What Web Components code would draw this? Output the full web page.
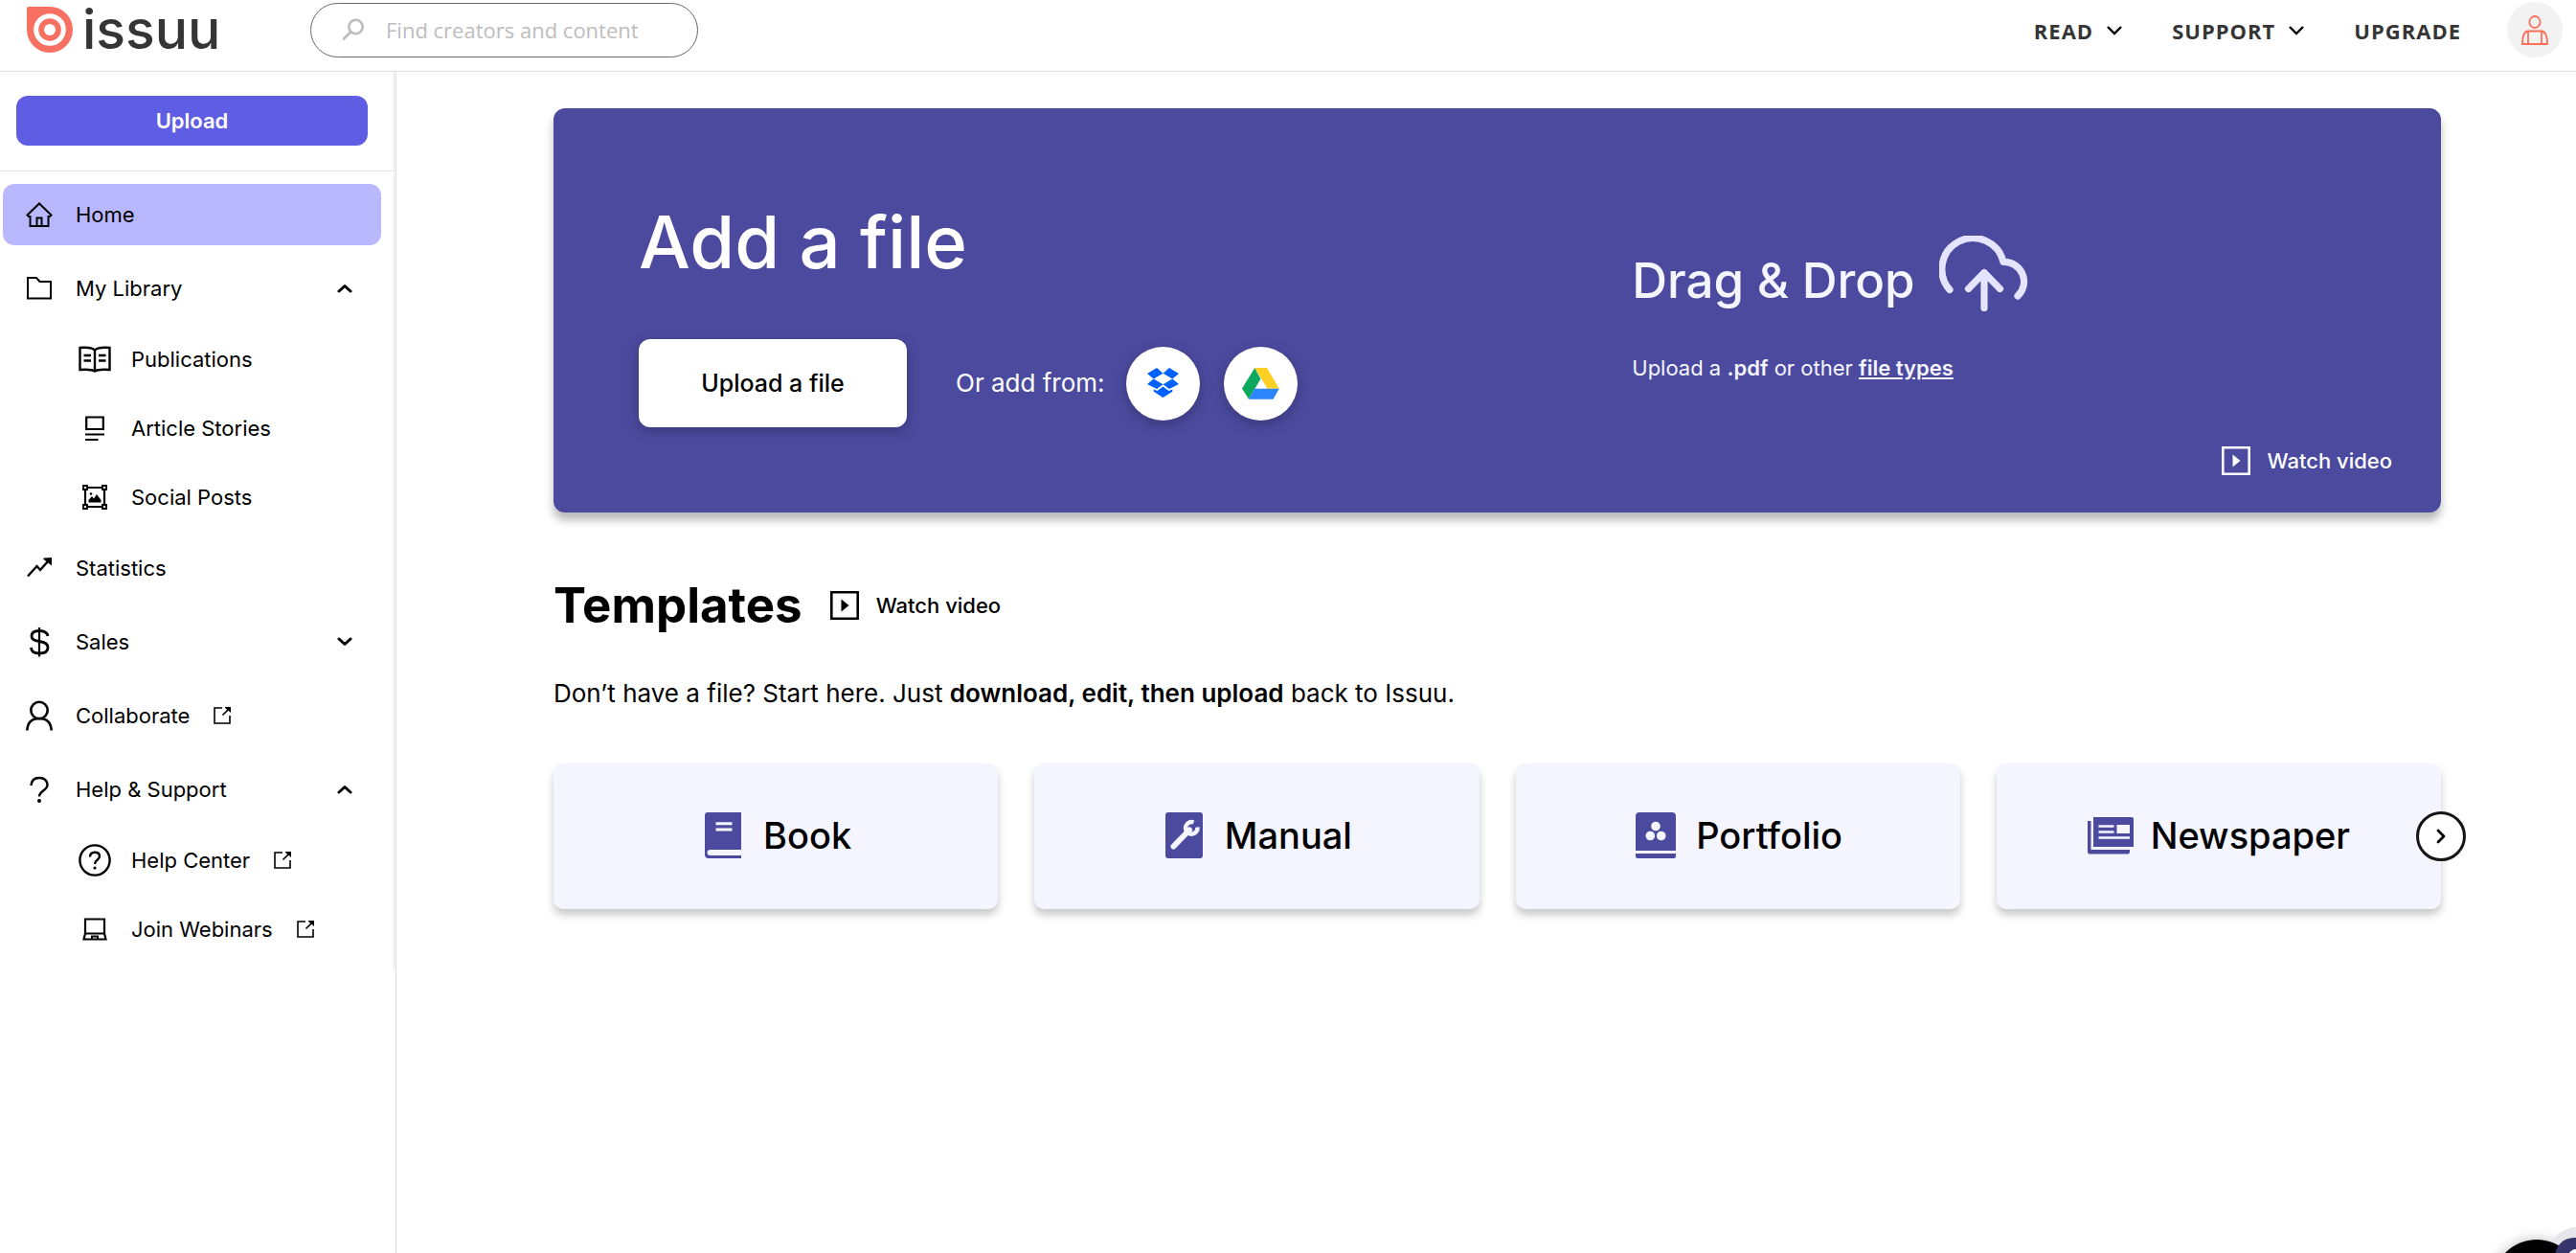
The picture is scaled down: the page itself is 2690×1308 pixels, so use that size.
<!DOCTYPE html>
<html lang="en">
<head>
<meta charset="utf-8">
<title>Issuu</title>
<style>
  html, body { margin: 0; height: 100%; background: #fff; }
  body { font-family: Inter, "Liberation Sans", sans-serif; font-size: 22px; line-height: 32px; color: #000; }
</style>
</head>
<body>
<app-shell></app-shell>
<script>
const define = (name, html, setup) => {
  const template = document.createElement('template');
  template.innerHTML = html;
  customElements.define(name, class extends HTMLElement {
    constructor() {
      super();
      this.attachShadow({ mode: 'open' }).append(template.content.cloneNode(true));
    }
    connectedCallback() { if (setup) setup(this, this.shadowRoot); }
  });
};

const line = (w, h, sw, body) =>
  `<svg width="${w}" height="${h}" viewBox="0 0 ${w} ${h}" fill="none" stroke="currentColor" stroke-width="${sw}" aria-hidden="true">${body}</svg>`;
const solid = (w, h, body) =>
  `<svg width="${w}" height="${h}" viewBox="0 0 ${w} ${h}" fill="currentColor" aria-hidden="true">${body}</svg>`;

const ICONS = {
  logo: solid(48, 48, '<path fill="#f77062" d="M2 0H24A24 24 0 1 1 0 24V2Q0 0 2 0Z"/><circle cx="24" cy="24" r="14.3" fill="none" stroke="#fff" stroke-width="5"/><circle cx="24" cy="24" r="6" fill="#fff"/>'),
  search: line(24, 24, 2.6, '<circle cx="14.5" cy="9" r="7.2"/><path stroke-linecap="round" d="M9.5 14 2 21.5"/>'),
  menu: line(16, 10, 2.4, '<path d="M1 1l7 7 7-7"/>'),
  avatar: line(28, 31, 1.8, '<ellipse cx="14" cy="7" rx="5.6" ry="6"/><path d="M7 16.5H21Q27 17 27 30H1Q1 17 7 16.5ZM7 16.5V30M21 16.5V30"/>'),
  home: line(28, 28, 2, '<path d="M1.5 14.5 14 2.5 26.5 14.5 25 16H23.5V26H4.5V16H3ZM11.5 26V17.5H16.5V26"/>'),
  folder: line(28, 28, 2, '<path d="M2 3H11L14.5 7H26V24.5H2Z"/>'),
  stats: line(28, 28, 2.4, '<path d="M2 22.5 11.5 12 15 16 23 7"/><path fill="currentColor" stroke="none" d="M27 3V11.5L18.5 5V3.5Z"/>'),
  dollar: line(28, 32, 2.8, '<path d="M23 10Q22 4.5 14 4.5 6 4.5 6 10 6 14.5 14 15.5 23 16.5 23 22 23 28 14 28 5.5 28 5.5 22"/><path stroke-width="2.2" d="M14 1V31.5"/>'),
  user: line(28, 32, 2.6, '<circle cx="14" cy="10.5" r="8.7"/><path d="M1.3 31.5Q2 19 14 19T26.7 31.5"/>'),
  question: line(28, 28, 2.4, '<path d="M5.5 10Q6 2 14 2T22.5 9.5C22.5 15 14 15.5 14 21.5"/><circle cx="14" cy="26" r="2" fill="currentColor" stroke="none"/>'),
  up: line(16, 10, 3, '<path stroke-linecap="round" stroke-linejoin="round" d="M2 8 8 2.5 14 8"/>'),
  down: line(16, 10, 3, '<path stroke-linecap="round" stroke-linejoin="round" d="M2 2 8 7.5 14 2"/>'),
  external: line(18, 18, 1.6, '<path d="M9 1H1V17H17V9M9.5 8.5 15.5 2.5"/><path fill="currentColor" stroke="none" d="M18 0V6L12 1V0Z"/>'),
  publications: line(34, 28, 2.4, '<path d="M1.5 2Q13 1 17 4.5 21 1 32.5 2V25Q21 24 17 26.5 13 24 1.5 25ZM17 4.5V26.5M5.5 10H13M5.5 15.5H13M21 10H28.5M21 15.5H28.5"/>'),
  article: line(20, 28, 2.2, '<path d="M1.2 2.5H18.8V15H1.2ZM0 20.5H20M0 26H13.5"/>'),
  social: line(28, 28, 2.2, '<path d="M4 4H24V24H4Z"/><path stroke-width="1.8" fill="#fff" d="M2 2h4v4H2ZM22 2h4v4h-4ZM2 22h4v4H2ZM22 22h4v4h-4Z"/><path fill="currentColor" stroke="none" d="M7.5 19.5V17L11 13 13 15.5 16 11 20.5 17V19.5Z"/><circle cx="10" cy="10.5" r="1.3" fill="currentColor" stroke="none"/>'),
  help: line(34, 34, 2.4, '<circle cx="17" cy="17" r="15.6"/><path d="M12 13.5Q12 8.8 17 8.8T22 13C22 16.5 17 16.5 17 21"/><circle cx="17" cy="25" r="1.6" fill="currentColor" stroke="none"/>'),
  laptop: line(26, 24, 2.2, '<path d="M3 1.5H23V16.5L24.5 22.5H1.5L3 16.5ZM3 16.5H23"/><path stroke-width="2" d="M10 22V19.5H16V22"/>'),
  dropbox: solid(33, 32, '<path fill="#0061fe" d="M10 0 16.5 5.7 6.7 11.4 0 6ZM23 0 33 6 26.3 11.4 16.5 5.7ZM0 17 6.7 11.4 16.5 17.3 10 22ZM26.3 11.4 33 17 23 22 16.5 17.3ZM16.5 19.5 22.5 24 26.3 22.5V24.8L16.5 31 6.7 24.8V22.5L10.5 24Z"/>'),
  drive: solid(39, 33, '<path fill="#0da960" d="M13.3 0 19.5 11.5 7 32.7 0 21.5Z"/><path fill="#ffd024" d="M13.3 0H26L38.8 21.7H26.5Z"/><path fill="#2d85fc" d="M13.2 21.7H38.8L32.5 32.7H7Z"/>'),
  cloud: line(96, 79, 7.2, '<path stroke-linecap="round" stroke-linejoin="round" d="M11 56.5A32.5 32.5 0 1 1 67 27.5A20.5 20.5 0 0 1 82 63M47 75.5V38.5M30.5 55.5 47 38.5 63.5 55.5"/>'),
  play: line(30, 30, 2.6, '<path d="M1.3 1.3H28.7V28.7H1.3Z"/><path fill="currentColor" stroke="none" d="M11.5 8.5V21.5L19.5 15Z"/>'),
  book: solid(38, 48, '<path d="M3 0H38V39H6Q2.5 39 2.5 42T6 45H38V48H4Q0 48 0 44V3Q0 0 3 0Z"/><path stroke="#f5f5ff" stroke-width="3" d="M11.5 11.7H28.5M11.5 18H28.5"/>'),
  manual: solid(39, 48, '<rect width="39" height="48" rx="3"/><path stroke="#f5f5ff" stroke-width="6" stroke-linecap="round" d="M8.5 35.5 25 18.5"/><path fill="none" stroke="#f5f5ff" stroke-width="4.5" d="M29.5 10.5A6.3 6.3 0 1 0 33.5 15.5"/>'),
  portfolio: solid(42, 48, '<path d="M4 0H38Q42 0 42 4V40H0V4Q0 0 4 0ZM0 43H42V46Q42 48 40 48H2Q0 48 0 46Z"/><g fill="#f5f5ff"><circle cx="21" cy="14.5" r="4.8"/><circle cx="15.3" cy="24.5" r="4.8"/><circle cx="26.7" cy="24.5" r="4.8"/></g>'),
  newspaper: solid(48, 39, '<path d="M6 0H46Q48 0 48 2V31H6ZM0 4H3.5V34H44V36Q44 38.5 42 38.5H2Q0 38.5 0 36Z"/><path stroke="#f5f5ff" stroke-width="2.6" d="M11.5 9.5H27.5M11.5 15.5H27.5M11.5 21.5H44"/><path fill="#f5f5ff" d="M30.5 8H44V17H30.5Z"/>'),
  next: line(10, 16, 2.8, '<path stroke-linecap="round" stroke-linejoin="round" d="M2 2 8 8 2 14"/>')
};

define('ui-icon', '', (el, root) => {
  root.innerHTML = '<style>:host{display:inline-flex;flex:none}svg{display:block}</style>' + ICONS[el.getAttribute('name')];
});

define('search-box', `
<style>
  :host { display: block; width: 405px; }
  form { display: flex; align-items: center; gap: 22px; height: 57px; box-sizing: border-box; padding: 0 32px; border: 1px solid #6a6a6a; border-radius: 29px; color: #bdbdbd; }
  input { flex: 1; min-width: 0; padding: 0; border: 0; outline: 0; background: none; font: 22px/32px "Open Sans", sans-serif; color: #353535; }
  input::placeholder { color: #bdbdbd; opacity: 1; }
</style>
<form role="search"><ui-icon name="search"></ui-icon><input type="search" aria-label="Find creators and content" placeholder="Find creators and content"></form>`);

define('header-menu', `
<style>
  :host { display: block; }
  button { display: flex; align-items: center; gap: 14px; padding: 0; border: 0; background: none; font: 700 22px/32px "Open Sans", sans-serif; letter-spacing: 1px; color: #353535; }
  ui-icon { color: #000; }
</style>
<button type="button"><slot></slot><ui-icon name="menu"></ui-icon></button>`);

define('site-header', `
<style>
  :host { display: block; border-bottom: 1px solid #dedede; }
  header { display: flex; align-items: center; height: 74px; box-sizing: border-box; padding: 0 14px 12px 28px; }
  .logo { display: flex; align-items: center; gap: 10px; width: 296px; text-decoration: none; color: #353535; font: 500 57px/48px Inter, sans-serif; }
  nav { display: flex; align-items: center; gap: 52px; margin-left: auto; padding-top: 2px; }
  .upgrade { font: 700 22px/32px "Open Sans", sans-serif; letter-spacing: 1px; color: #353535; text-decoration: none; }
  .avatar { display: grid; place-items: center; width: 58px; height: 58px; margin-left: 48px; padding: 0; border: 0; border-radius: 50%; background: #f2f2f2; color: #ff6f58; }
</style>
<header>
  <a class="logo" href="#"><ui-icon name="logo"></ui-icon><span>issuu</span></a>
  <search-box></search-box>
  <nav><header-menu>READ</header-menu><header-menu>SUPPORT</header-menu><a class="upgrade" href="#">UPGRADE</a></nav>
  <button class="avatar" type="button" aria-label="Account"><ui-icon name="avatar"></ui-icon></button>
</header>`);

define('nav-row', '', (el, root) => {
  const arrow = el.getAttribute('arrow');
  const tag = arrow ? 'button' : 'a';
  const attrs = arrow ? 'type="button"' : 'href="#"';
  root.innerHTML = `
<style>
  :host { display: block; }
  a, button { display: flex; align-items: center; width: 100%; height: 64px; box-sizing: border-box; padding: 0 24px; border: 0; border-radius: 12px; background: none; font: inherit; color: inherit; text-decoration: none; text-align: left; }
  :host([current]) a { background: #b9b7fd; }
  .icon { display: flex; justify-content: center; width: 28px; margin-right: 24px; }
  :host([sub]) a { height: 72px; padding-left: 79px; }
  :host([sub]) .icon { width: 34px; margin-right: 21px; }
  .external { margin-left: 25px; }
  .arrow { margin-left: auto; margin-right: 6px; }
</style>
<${tag} ${attrs}><span class="icon"><ui-icon name="${el.getAttribute('icon')}"></ui-icon></span><slot></slot>${
  el.hasAttribute('external') ? '<ui-icon class="external" name="external"></ui-icon>' : ''}${
  arrow ? `<ui-icon class="arrow" name="${arrow}"></ui-icon>` : ''}</${tag}>`;
});

define('side-nav', `
<style>
  :host { display: block; box-sizing: border-box; width: 414px; border-right: 1px solid #dedede; }
  aside { margin-right: 1px; border-right: 1px solid #e4e4e4; }
  .top { padding: 25px 27px 26px 17px; border-bottom: 1px solid #e4e4e4; }
  .top button { display: block; width: 100%; height: 52px; padding: 0; border: 0; border-radius: 12px; background: #5f5de4; color: #fff; font: 600 22px/32px Inter, sans-serif; }
  nav { display: flex; flex-direction: column; gap: 13px; padding: 13px 13px 13px 3px; }
  .sub { margin: -7px 0; }
</style>
<aside>
  <div class="top"><button type="button">Upload</button></div>
  <nav>
    <nav-row icon="home" current>Home</nav-row>
    <nav-row icon="folder" arrow="up">My Library</nav-row>
    <div class="sub">
      <nav-row sub icon="publications">Publications</nav-row>
      <nav-row sub icon="article">Article Stories</nav-row>
      <nav-row sub icon="social">Social Posts</nav-row>
    </div>
    <nav-row icon="stats">Statistics</nav-row>
    <nav-row icon="dollar" arrow="down">Sales</nav-row>
    <nav-row icon="user" external>Collaborate</nav-row>
    <nav-row icon="question" arrow="up">Help &amp; Support</nav-row>
    <div class="sub">
      <nav-row sub icon="help" external>Help Center</nav-row>
      <nav-row sub icon="laptop" external>Join Webinars</nav-row>
    </div>
  </nav>
</aside>`);

define('watch-video', `
<style>
  :host { display: block; }
  a { display: flex; align-items: center; gap: 18px; color: inherit; text-decoration: none; font: 500 22px/32px Inter, sans-serif; }
</style>
<a href="#"><ui-icon name="play"></ui-icon><span>Watch video</span></a>`);

define('upload-hero', `
<style>
  :host { display: block; }
  section { display: grid; grid-template-columns: 4fr 3fr; border-radius: 12px; background: #4b4a9f; color: #fff; box-shadow: 0 8px 10px rgba(0,0,0,.28); }
  .add { display: flex; flex-direction: column; gap: 54px; padding: 91px 0 89px 89px; }
  h1 { margin: 0; font: 500 76px/96px Inter, sans-serif; }
  .sources { display: flex; align-items: center; gap: 25px; font-size: 26px; }
  .sources span { margin: 0 -3px 0 26px; }
  .sources button { padding: 0; border: 0; background: #fff; color: #000; box-shadow: 0 4px 14px rgba(0,0,0,.25); }
  .sources .upload { width: 280px; height: 92px; border-radius: 12px; font: 500 25px/32px Inter, sans-serif; }
  .sources .round { display: grid; place-items: center; width: 77px; height: 77px; border-radius: 50%; }
  .drop { display: flex; flex-direction: column; padding: 133px 51px 38px 0; color: #f5f5ff; }
  .title { display: flex; align-items: flex-end; gap: 25px; margin-bottom: 43px; }
  h2 { margin: 0; font: 500 51px/64px Inter, sans-serif; }
  .title ui-icon { color: #e5e4ff; }
  p { margin: 0; }
  p a { color: inherit; font-weight: 600; }
  b { font-weight: 600; }
  watch-video { margin-top: auto; align-self: flex-end; color: #fff; }
</style>
<section>
  <div class="add">
    <h1>Add a file</h1>
    <div class="sources">
      <button class="upload" type="button">Upload a file</button>
      <span>Or add from:</span>
      <button class="round" type="button" aria-label="Dropbox"><ui-icon name="dropbox"></ui-icon></button>
      <button class="round" type="button" aria-label="Google Drive"><ui-icon name="drive"></ui-icon></button>
    </div>
  </div>
  <div class="drop">
    <div class="title"><h2>Drag &amp; Drop</h2><ui-icon name="cloud"></ui-icon></div>
    <p>Upload a <b>.pdf</b> or other <a href="#">file types</a></p>
    <watch-video></watch-video>
  </div>
</section>`);

define('template-card', '', (el, root) => {
  root.innerHTML = `
<style>
  :host { display: block; }
  a { display: flex; align-items: center; justify-content: center; gap: 18px; height: 152px; box-sizing: border-box; padding-bottom: 2px; border-radius: 10px; background: #f5f5ff; color: #000; text-decoration: none; font: 500 38px/48px Inter, sans-serif; box-shadow: 0 6px 8px rgba(0,0,0,.22); }
  ui-icon { width: 48px; justify-content: center; color: #4b4a9f; }
</style>
<a href="#"><ui-icon name="${el.getAttribute('icon')}"></ui-icon><slot></slot></a>`;
});

define('template-list', `
<style>
  :host { display: block; }
  .head { display: flex; align-items: center; gap: 29px; }
  h2 { margin: 0; font: 700 51px/64px Inter, sans-serif; }
  p { margin: 44px 0 57px; font-size: 26px; }
  b { font-weight: 600; }
  .cards { position: relative; display: grid; grid-template-columns: repeat(4, 1fr); gap: 38px; }
  .next { position: absolute; top: 50%; left: 100%; transform: translate(-50%, -50%); display: grid; place-items: center; width: 52px; height: 52px; padding: 0; border: 3px solid #151515; border-radius: 50%; background: #fff; color: #000; }
</style>
<section>
  <div class="head"><h2>Templates</h2><watch-video></watch-video></div>
  <p>Don’t have a file? Start here. Just <b>download, edit, then upload</b> back to Issuu.</p>
  <div class="cards">
    <template-card icon="book">Book</template-card>
    <template-card icon="manual">Manual</template-card>
    <template-card icon="portfolio">Portfolio</template-card>
    <template-card icon="newspaper">Newspaper</template-card>
    <button class="next" type="button" aria-label="Next"><ui-icon name="next"></ui-icon></button>
  </div>
</section>`);

define('help-widget', `
<style>
  :host { position: fixed; right: 0; bottom: 0; display: block; }
  button { display: block; padding: 0; border: 0; background: none; }
  svg { display: block; }
</style>
<button type="button" aria-label="Help">
  <svg width="120" height="48" viewBox="0 0 120 48" aria-hidden="true">
    <defs><filter id="soft" x="-50%" y="-50%" width="200%" height="200%"><feGaussianBlur stdDeviation="7"/></filter></defs>
    <circle cx="79" cy="82" r="48" opacity=".25" filter="url(#soft)"/>
    <circle cx="122" cy="54" r="33" fill="#e6e6ec"/>
    <circle cx="79" cy="80" r="46"/>
    <circle cx="118" cy="52" r="20" fill="#37346b"/>
    <circle cx="120" cy="52" r="8" fill="#fff"/>
  </svg>
</button>`);

define('app-shell', `
<style>
  :host { display: flex; flex-direction: column; min-height: 100%; }
  .body { display: flex; flex: 1; }
  side-nav { flex: none; }
  main { flex: 1; min-width: 0; padding: 38px 141px 38px 164px; }
  template-list { margin-top: 65px; }
</style>
<site-header></site-header>
<div class="body">
  <side-nav></side-nav>
  <main><upload-hero></upload-hero><template-list></template-list></main>
</div>
<help-widget></help-widget>`);
</script>
</body>
</html>
